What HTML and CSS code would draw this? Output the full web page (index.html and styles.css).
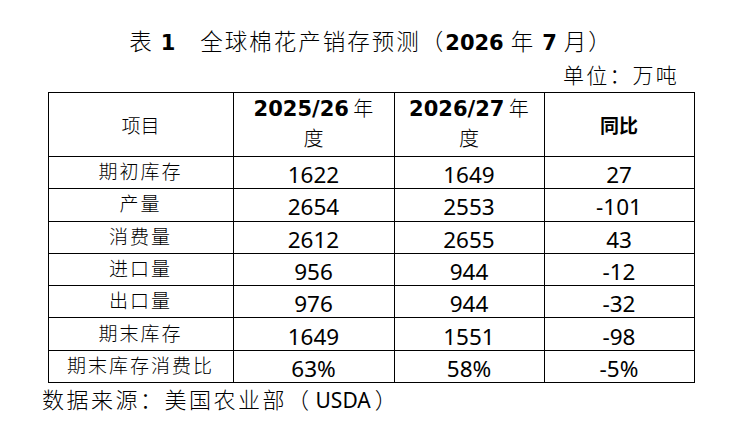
FILE: index.html
```html
<!DOCTYPE html>
<html lang="zh-CN">
<head>
<meta charset="utf-8">
<title>全球棉花产销存预测</title>
<link rel="stylesheet" href="styles.css">
</head>
<body>
<div class="page">
  <h1 class="title"><span>表</span> <b class="bn">1</b><span class="gap">全球棉花产销存预测（</span><b class="bn">2026</b> <span>年</span> <b class="bn">7</b> <span>月）</span></h1>
  <div class="unit">单位：万吨</div>
  <table class="data">
    <colgroup>
      <col class="c1"><col class="c2"><col class="c3"><col class="c4">
    </colgroup>
    <thead>
      <tr>
        <th class="h-item">项目</th>
        <th class="h-year"><b class="hb">2025/26</b> 年<br>度</th>
        <th class="h-year"><b class="hb">2026/27</b> 年<br>度</th>
        <th class="h-yoy">同比</th>
      </tr>
    </thead>
    <tbody>
      <tr><td class="lbl">期初库存</td><td>1622</td><td>1649</td><td>27</td></tr>
      <tr><td class="lbl">产量</td><td>2654</td><td>2553</td><td>-101</td></tr>
      <tr><td class="lbl">消费量</td><td>2612</td><td>2655</td><td>43</td></tr>
      <tr><td class="lbl">进口量</td><td>956</td><td>944</td><td>-12</td></tr>
      <tr><td class="lbl">出口量</td><td>976</td><td>944</td><td>-32</td></tr>
      <tr><td class="lbl">期末库存</td><td>1649</td><td>1551</td><td>-98</td></tr>
      <tr><td class="lbl">期末库存消费比</td><td>63%</td><td>58%</td><td>-5%</td></tr>
    </tbody>
  </table>
  <p class="source">数据来源：美国农业部（<span class="latin">USDA</span>）</p>
</div>
</body>
</html>
```
FILE: styles.css
```css
body {
  margin: 0;
  background: #fff;
  color: #000;
}

.page {
  width: 742px;
}

.title {
  margin: 24px 0 0;
  height: 32px;
  text-align: center;
  font-family: "Noto Sans CJK SC", sans-serif;
  font-weight: 300;
  font-size: 22.5px;
  line-height: 32px;
  letter-spacing: 2px;
}

.title .bn {
  font-family: "DejaVu Sans", sans-serif;
  font-weight: 700;
  font-size: 21px;
  letter-spacing: 0;
  line-height: 1;
}

.title .gap {
  margin-left: 25px;
}

.unit {
  margin-top: 4px;
  height: 28px;
  padding-right: 63px;
  text-align: right;
  font-family: "Noto Sans CJK SC", sans-serif;
  font-weight: 300;
  font-size: 21px;
  line-height: 28px;
  letter-spacing: 2.2px;
}

.data {
  margin: 4px auto 0;
  width: 646px;
  border-collapse: collapse;
  table-layout: fixed;
}

.c1 { width: 185px; }
.c2 { width: 161px; }
.c3 { width: 150px; }
.c4 { width: 150px; }

.data th,
.data td {
  border: 1px solid #000;
  padding: 0;
  text-align: center;
  vertical-align: middle;
}

.data thead th {
  height: 60px;
  font-family: "Noto Sans CJK SC", sans-serif;
  font-size: 19px;
  font-weight: 300;
}

.data th.h-year {
  font-size: 20px;
  line-height: 30px;
  padding-bottom: 3px;
}

.data .hb {
  font-family: "DejaVu Sans", sans-serif;
  font-weight: 700;
  font-size: 21px;
  line-height: 1;
}

.data th.h-yoy {
  font-weight: 700;
}

.data tbody td {
  height: 27.3px;
  padding-top: 4px;
  font-family: "Noto Sans", sans-serif;
  font-size: 22.5px;
  line-height: 27px;
}

.data tbody td.lbl {
  padding: 0 0 4px;
  font-family: "Noto Sans CJK SC", sans-serif;
  font-weight: 300;
  font-size: 19px;
  letter-spacing: 2px;
}

.source {
  margin: 1px 0 0;
  padding-left: 42px;
  font-family: "Noto Sans CJK SC", sans-serif;
  font-weight: 300;
  font-size: 22px;
  line-height: 28px;
  letter-spacing: 2.5px;
}

.source .latin {
  margin: 0 4px;
  font-family: "Noto Sans", sans-serif;
  font-weight: 400;
  font-size: 21px;
  letter-spacing: 0;
}
```
